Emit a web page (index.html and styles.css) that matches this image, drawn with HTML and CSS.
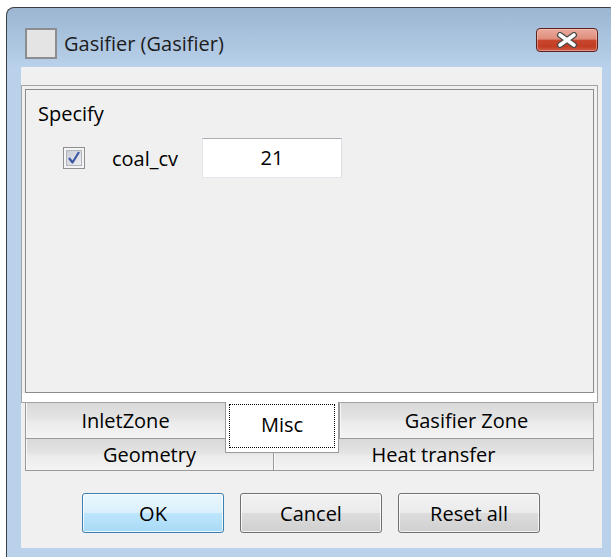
FILE: index.html
```html
<!DOCTYPE html>
<html lang="en">
<head>
<meta charset="utf-8">
<title>Gasifier (Gasifier)</title>
<link rel="stylesheet" href="styles.css">
</head>
<body>
<div class="window">
  <div class="titlebar">
    <span class="app-icon"></span>
    <span class="caption">Gasifier (Gasifier)</span>
    <button class="close-btn" type="button" aria-label="Close">
      <svg width="24" height="16" viewBox="0 0 24 16">
        <path d="M5 3 L19 13 M19 3 L5 13" stroke="#4a4a4a" stroke-width="6" stroke-linecap="round" fill="none"/>
        <path d="M5 3 L19 13 M19 3 L5 13" stroke="#ffffff" stroke-width="3.6" stroke-linecap="round" fill="none"/>
      </svg>
    </button>
  </div>

  <div class="client">
    <div class="tabwidget">
      <div class="pane">
        <div class="page">
          <div class="group-title">Specify</div>
          <div class="field-row">
            <span class="checkbox">
              <svg width="22" height="22" viewBox="0 0 22 22">
                <defs>
                  <linearGradient id="boxFill" x1="0" y1="0" x2="1" y2="1">
                    <stop offset="0" stop-color="#c9ccd4"/>
                    <stop offset="1" stop-color="#eef0f4"/>
                  </linearGradient>
                </defs>
                <rect x="0.5" y="0.5" width="21" height="21" fill="#f4f4f4" stroke="#8f8f8f"/>
                <rect x="3.5" y="3.5" width="15" height="15" fill="url(#boxFill)" stroke="#b0b4bb"/>
                <path d="M6 11 L9.5 15.5 L16 5" stroke="#3f58a6" stroke-width="2.2" fill="none" stroke-linejoin="round"/>
              </svg>
            </span>
            <span class="field-label">coal_cv</span>
            <div class="line-edit">21</div>
          </div>
        </div>
      </div>

      <div class="tab-row row-near">
        <div class="tab tab-inlet">InletZone</div>
        <div class="tab tab-misc current">Misc</div>
        <div class="tab tab-gasifier last">Gasifier Zone</div>
      </div>
      <div class="tab-row row-far">
        <div class="tab tab-geometry">Geometry</div>
        <div class="tab tab-heat last">Heat transfer</div>
      </div>
    </div>

    <div class="button-row">
      <button class="btn default" type="button">OK</button>
      <button class="btn" type="button">Cancel</button>
      <button class="btn" type="button">Reset all</button>
    </div>
  </div>
</div>
</body>
</html>
```

FILE: styles.css
```css
* {
  box-sizing: border-box;
}

html,
body {
  margin: 0;
  padding: 0;
}

body {
  width: 611px;
  height: 557px;
  overflow: hidden;
  background: #ffffff;
  font-family: "Open Sans", "Noto Sans", sans-serif;
  font-size: 20px;
  color: #000000;
}

/* Aero-style window frame */
.window {
  margin: 7px 0 0 6px;
  width: 611px;
  height: 560px;
  padding: 0 14px;
  border: 1px solid #3a3e44;
  border-bottom: none;
  border-radius: 8px 8px 0 0;
  background: linear-gradient(to bottom, #9cb5d1 0, #aac3de 30px, #b9d1ea 59px, #b9d1ea 100%);
  display: flex;
  flex-direction: column;
}

.titlebar {
  height: 59px;
  flex: none;
  display: flex;
  align-items: flex-start;
  padding: 20px 4px 0 4px;
}

.app-icon {
  width: 32px;
  height: 31px;
  flex: none;
  border: 2px solid #8b8d90;
  background: #e4e4e4;
}

.caption {
  margin-left: 7px;
  line-height: 31px;
  font-size: 20px;
  color: #1c1c1c;
  white-space: nowrap;
}

.close-btn {
  margin-left: auto;
  width: 62px;
  height: 24px;
  padding: 0;
  border: 1px solid #5c2220;
  border-radius: 4px;
  background: linear-gradient(to bottom, #eaaa9c 0, #df8d7b 45%, #c8472e 52%, #c23d22 80%, #d0604a 100%);
  box-shadow: inset 0 0 0 1px rgba(255, 210, 200, 0.45);
  display: flex;
  align-items: center;
  justify-content: center;
}

.close-btn svg {
  display: block;
}

/* Dialog client area */
.client {
  width: 581px;
  height: 481px;
  flex: none;
  background: #f0f0f0;
  padding: 18px 4px 0 0;
}

.tabwidget {
  width: 577px;
}

.pane {
  height: 318px;
  border: 1px solid #a3a3a3;
  padding: 3px 3px 9px 3px;
  background: linear-gradient(#f0f0f0, #f0f0f0) no-repeat top left / 100% calc(100% - 9px), #ffffff;
}

.page {
  height: 304px;
  border: 1px solid #8a8b8d;
  background: #f0f0f0;
  padding: 10px 0 0 12px;
}

.group-title {
  line-height: 27px;
}

.field-row {
  margin-top: 11px;
  margin-left: 25px;
  display: flex;
  align-items: center;
  height: 40px;
}

.checkbox {
  width: 22px;
  height: 22px;
  flex: none;
}

.checkbox svg {
  display: block;
}

.field-label {
  width: 90px;
  margin-left: 27px;
}

.line-edit {
  width: 140px;
  height: 40px;
  border: 1px solid;
  border-color: #abadb3 #dbdfe6 #e3e9ef #e2e3ea;
  background: #ffffff;
  text-align: center;
  line-height: 38px;
}

/* Tabs sit below the pane, in two rows */
.tab-row {
  display: flex;
  margin: 0 4px;
}

.row-near {
  height: 36px;
  align-items: flex-start;
}

.row-far {
  height: 32px;
}

.tab {
  height: 100%;
  border-left: 1px solid #999a9c;
  border-bottom: 1px solid #999a9c;
  background: linear-gradient(to bottom, #d9d9d9 0, #e4e4e4 45%, #ececec 55%, #f3f3f3 100%);
  box-shadow: inset 1px 0 0 #f8f8f8;
  display: flex;
  align-items: center;
  justify-content: center;
  white-space: nowrap;
}

.tab.last {
  border-right: 1px solid #999a9c;
}

.tab-inlet {
  width: 200px;
}

.tab-misc {
  width: 114px;
}

.tab-gasifier {
  width: 255px;
}

.tab-geometry {
  width: 248px;
}

.tab-heat {
  width: 321px;
}

.tab.current {
  position: relative;
  z-index: 1;
  height: 51px;
  margin-top: -1px;
  padding-bottom: 5px;
  background: #ffffff;
  box-shadow: none;
  border-right: 1px solid #999a9c;
}

.tab.current::after {
  content: "";
  position: absolute;
  top: 2px;
  left: 3px;
  right: 3px;
  bottom: 4px;
  border: 1px dotted #000000;
}

/* Dialog buttons */
.button-row {
  display: flex;
  gap: 16px;
  margin-top: 22px;
  padding-left: 61px;
}

.btn {
  width: 142px;
  height: 40px;
  padding: 0;
  border: 1px solid #707070;
  border-radius: 3px;
  background: linear-gradient(to bottom, #f2f2f2 0, #ebebeb 50%, #dddddd 51%, #cfcfcf 100%);
  box-shadow: inset 0 0 0 1px rgba(255, 255, 255, 0.75);
  font: inherit;
  color: #000000;
}

.btn.default {
  border-color: #3c7fb1;
  background: linear-gradient(to bottom, #eaf6fd 0, #d9f0fc 50%, #bee6fd 51%, #a7d9f5 100%);
}
```
